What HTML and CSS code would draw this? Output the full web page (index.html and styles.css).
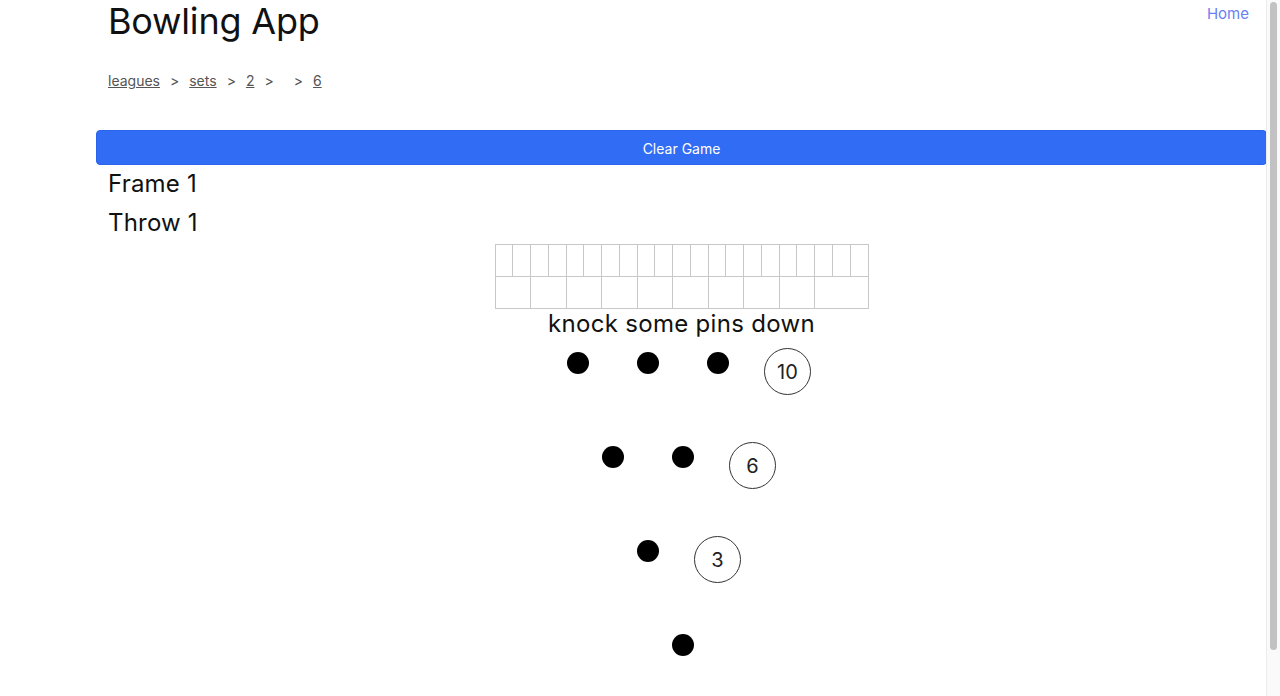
FILE: index.html
```html
<!DOCTYPE html>
<html lang="en">
<head>
<meta charset="utf-8">
<title>Bowling App</title>
<link rel="stylesheet" href="styles.css">
</head>
<body>
<div class="page">
  <header class="header">
    <h1 class="title">Bowling App</h1>
    <a class="home" href="#">Home</a>
  </header>
  <nav class="crumbs">
    <a href="#">leagues</a><span>&gt;</span><a href="#">sets</a><span>&gt;</span><a href="#">2</a><span>&gt;</span><a href="#"></a><span>&gt;</span><a href="#">6</a>
  </nav>
  <button class="clear">Clear Game</button>
  <div class="status">Frame 1</div>
  <div class="status">Throw 1</div>
  <div class="board">
    <div class="sheet">
      <div class="c"></div><div class="c"></div><div class="c"></div><div class="c"></div><div class="c"></div><div class="c"></div><div class="c"></div><div class="c"></div><div class="c"></div><div class="c"></div><div class="c"></div><div class="c"></div><div class="c"></div><div class="c"></div><div class="c"></div><div class="c"></div><div class="c"></div><div class="c"></div><div class="c"></div><div class="c"></div><div class="c"></div>
      <div class="f"></div><div class="f"></div><div class="f"></div><div class="f"></div><div class="f"></div><div class="f"></div><div class="f"></div><div class="f"></div><div class="f"></div><div class="f last"></div>
    </div>
    <div class="prompt">knock some pins down</div>
    <div class="lane">
      <div class="row"><div class="slot"><span class="pin"></span></div><div class="slot"><span class="pin"></span></div><div class="slot"><span class="pin"></span></div><div class="slot"><span class="count">10</span></div></div>
      <div class="row"><div class="slot"><span class="pin"></span></div><div class="slot"><span class="pin"></span></div><div class="slot"><span class="count">6</span></div></div>
      <div class="row"><div class="slot"><span class="pin"></span></div><div class="slot"><span class="count">3</span></div></div>
      <div class="row"><div class="slot"><span class="pin"></span></div></div>
    </div>
  </div>
</div>
<div class="scrollbar"><div class="thumb"></div></div>
</body>
</html>
```
FILE: styles.css
```css
html { overflow: hidden; }
body {
  margin: 0;
  font-family: Inter, "Liberation Sans", sans-serif;
  color: #111;
  background: #fff;
}
.page {
  margin-right: 13px;
  padding-left: 96px;
}
.header {
  display: flex;
  justify-content: space-between;
  align-items: flex-start;
  padding: 0 18px 0 12px;
}
.title {
  margin: 0;
  font-size: 36px;
  line-height: 43px;
  font-weight: 400;
  letter-spacing: -0.2px;
}
.home {
  font-size: 15px;
  line-height: 28px;
  color: #6a80f2;
  text-decoration: none;
}
.crumbs {
  display: flex;
  gap: 10px;
  margin: 28px 0 0 12px;
  font-size: 14px;
  line-height: 20px;
  color: #555;
}
.crumbs a { color: #555; }
.clear {
  display: block;
  box-sizing: border-box;
  width: 100%;
  margin-top: 39px;
  height: 35px;
  padding-top: 2px;
  border: 1px solid #2b63ea;
  border-radius: 4px;
  background: #316cf4;
  color: #fff;
  font-family: inherit;
  font-size: 14px;
}
.status {
  padding-left: 12px;
  font-size: 24px;
  line-height: 38.5px;
  letter-spacing: 0.2px;
}
.board {
  display: flex;
  flex-direction: column;
  align-items: center;
  margin-top: 2px;
}
.sheet {
  box-sizing: border-box;
  width: 374px;
  display: grid;
  grid-template-columns: repeat(21, 1fr);
  grid-template-rows: 32px 32px;
  border-left: 1px solid #c8c8c8;
  border-top: 1px solid #c8c8c8;
}
.sheet > div {
  border-right: 1px solid #c8c8c8;
  border-bottom: 1px solid #c8c8c8;
}
.f { grid-column: span 2; }
.f.last { grid-column: span 3; }
.prompt {
  font-size: 24px;
  line-height: 28px;
  margin-top: 1px;
  letter-spacing: 0.3px;
}
.lane {
  display: flex;
  flex-direction: column;
  align-items: center;
  padding-top: 3px;
  margin-left: 2px;
}
.row {
  display: flex;
  justify-content: center;
  height: 94px;
}
.slot {
  width: 70px;
  display: flex;
  justify-content: center;
  align-items: flex-start;
}
.pin {
  width: 22px;
  height: 22px;
  margin-top: 11px;
  border-radius: 50%;
  background: #000;
}
.count {
  box-sizing: border-box;
  width: 47px;
  height: 47px;
  margin-top: 7px;
  border: 1px solid #333;
  border-radius: 50%;
  display: flex;
  align-items: center;
  justify-content: center;
  font-size: 20px;
  color: #222;
}
.scrollbar {
  position: fixed;
  top: 0;
  right: 0;
  width: 13px;
  height: 100%;
  background: #fafafa;
  border-left: 1px solid #ececec;
}
.thumb {
  position: absolute;
  top: 2px;
  left: 3px;
  width: 7px;
  height: 648px;
  border-radius: 4px;
  background: #c2c2c2;
}
```
